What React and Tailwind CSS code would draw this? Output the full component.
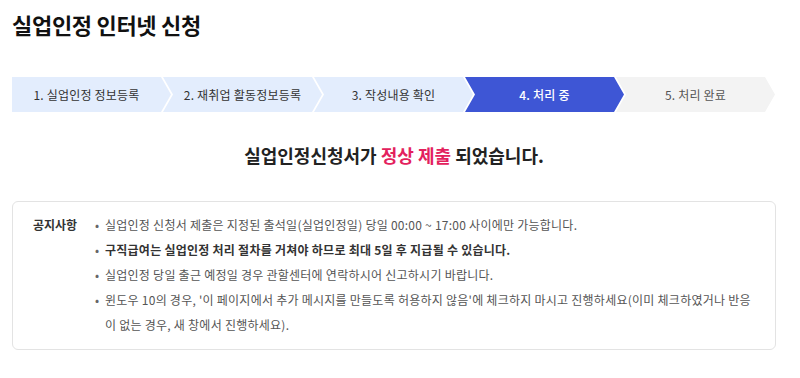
import React from 'react';

const steps = [
  { label: '1. 실업인정 정보등록', state: 'done' },
  { label: '2. 재취업 활동정보등록', state: 'done' },
  { label: '3. 작성내용 확인', state: 'done' },
  { label: '4. 처리 중', state: 'active' },
  { label: '5. 처리 완료', state: 'todo' },
];

const notices = [
  { text: '실업인정 신청서 제출은 지정된 출석일(실업인정일) 당일 00:00 ~ 17:00 사이에만 가능합니다.' },
  { text: '구직급여는 실업인정 처리 절차를 거쳐야 하므로 최대 5일 후 지급될 수 있습니다.', bold: true },
  { text: '실업인정 당일 출근 예정일 경우 관할센터에 연락하시어 신고하시기 바랍니다.' },
  {
    text: "윈도우 10의 경우, '이 페이지에서 추가 메시지를 만들도록 허용하지 않음'에 체크하지 마시고 진행하세요(이미 체크하였거나 반응이 없는 경우, 새 창에서 진행하세요).",
  },
];

const StepBar = () => (
  <div className="flex h-[35px] mt-[37px]">
    {steps.map((step, i) => {
      const color =
        step.state === 'active'
          ? 'bg-[#3e56d5] text-white font-medium'
          : step.state === 'done'
          ? 'bg-[#e3edfd] text-[#333333]'
          : 'bg-[#f3f3f3] text-[#555555]';
      const shape =
        i === 0
          ? '[clip-path:polygon(0_0,calc(100%_-_10px)_0,100%_50%,calc(100%_-_10px)_100%,0_100%)] pr-[10px]'
          : '-ml-[8px] pl-[10px] pr-[10px] [clip-path:polygon(0_0,calc(100%_-_10px)_0,100%_50%,calc(100%_-_10px)_100%,0_100%,10px_50%)]';
      return (
        <div
          key={step.label}
          className={`w-[159px] shrink-0 flex items-center justify-center text-[12px] tracking-[0.2px] ${color} ${shape}`}
        >
          {step.label}
        </div>
      );
    })}
  </div>
);

export default function App() {
  return (
    <div className="w-[800px] h-[378px] bg-white px-[12px] pt-[8px] font-['Noto_Sans_CJK_KR',sans-serif] text-[#333333]">
      <div className="w-[764px]">
        <h1 className="text-[22px] font-bold leading-[32px] text-[#111111] tracking-[-0.3px]">실업인정 인터넷 신청</h1>

        <StepBar />

        <p className="mt-[30px] text-center text-[18px] font-bold leading-[26px] text-[#222222]">
          실업인정신청서가 <span className="text-[#e3215d]">정상 제출</span> 되었습니다.
        </p>

        <div className="mt-[33px] border border-[#e3e3e3] rounded-[6px] px-[20px] pt-[10px] pb-[12px] flex">
          <div className="w-[62px] shrink-0 text-[12px] font-bold leading-[25px] text-[#333333]">공지사항</div>
          <ul className="flex-1">
            {notices.map((n, i) => (
              <li key={i} className="flex text-[12px] leading-[25px] tracking-[0.25px]">
                <span className="w-[10px] shrink-0 text-[#666666]">•</span>
                <span className={n.bold ? 'font-bold text-[#333333]' : 'text-[#555555]'}>{n.text}</span>
              </li>
            ))}
          </ul>
        </div>
      </div>
    </div>
  );
}
